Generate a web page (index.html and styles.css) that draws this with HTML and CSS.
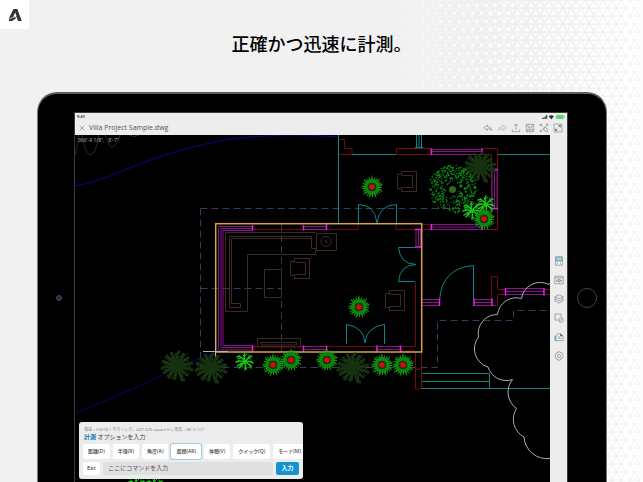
FILE: index.html
```html
<!DOCTYPE html>
<html lang="ja">
<head>
<meta charset="utf-8">
<meta name="viewport" content="width=device-width, initial-scale=1">
<title>Villa Project Sample.dwg</title>
<link rel="stylesheet" href="styles.css">
</head>
<body>
<svg class="mesh" id="mesh" aria-hidden="true"></svg>
<header class="brand">
  <svg class="brand-mark" viewBox="0 0 14 14" aria-label="Autodesk" role="img">
    <path fill="#333" d="M5.500 1H9.300L13.800 13H10L8.700 9.300L8 8.600L8.400 7.800L7.300 4.400L5 9L.8 10.500Z"/>
    <path fill="#888" d="M.8 10.500L6.200 8.500L8 8.900L6.800 10L1 12Z"/>
    <path fill="#333" d="M.8 13L1.100 11.400L8 9.200L7.600 10.700L4 13Z"/>
  </svg>
</header>
<h1 class="headline">正確かつ迅速に計測。</h1>

<main class="tablet">
  <div class="bezel"><span class="camera"></span></div>
  <section class="screen">
    <div class="status">
      <span>9:41</span>
      <svg class="status-icons" viewBox="0 0 23 6" aria-hidden="true">
        <path fill="#333" d="M0 5V4H1V5ZM1.4 5V3.2H2.4V5ZM2.8 5V2.2H3.8V5ZM4.2 5V1H5.2V5ZM9.3 5.4L6.7 2.3Q9.3 .1 11.9 2.3Z"/>
        <rect x="14" y="1" width="7.6" height="4" rx="1" fill="#5fd470"/><path stroke="#5fd470" d="M22.4 2.2V3.8"/>
      </svg>
    </div>
    <div class="titlebar">
      <button class="icon" aria-label="閉じる"><svg viewBox="0 0 10 10"><path d="M2.5 2.5L7.5 7.5M7.5 2.5L2.5 7.5"/></svg></button>
      <span class="filename">Villa Project Sample.dwg</span>
      <div class="actions">
        <button class="icon" aria-label="元に戻す"><svg viewBox="0 0 10 10"><path d="M4.4 2L.8 4.7L4.4 7.3V5.8Q7.5 5.5 8.7 7.4Q8.5 3.8 4.4 3.6Z"/></svg></button>
        <button class="icon faint" aria-label="やり直し"><svg viewBox="0 0 10 10"><path d="M5.6 2L9.2 4.7L5.6 7.3V5.8Q2.5 5.5 1.3 7.4Q1.5 3.8 5.6 3.6Z"/></svg></button>
        <button class="icon" aria-label="共有"><svg viewBox="0 0 10 10"><path d="M5 7V1M3.2 2.8L5 1L6.8 2.8M1.3 6.5V8.7H8.7V6.5"/></svg></button>
        <button class="icon" aria-label="保存"><svg viewBox="0 0 10 10"><path d="M1.3 1.3H8.7V8.7H1.3ZM3 1.3V4.2H7V1.3M2.7 8.7V6.2H7.3V8.7M4.7 6.4V8.4"/></svg></button>
        <button class="icon" aria-label="全体表示"><svg viewBox="0 0 10 10"><path d="M1.2 1.2L4.3 4.3M8.8 1.2L1.2 8.8M1.2 3V1.2H3M7 1.2H8.8V3M1.2 7V8.8H3M7.8 7.8L9.3 9.3"/><circle cx="6.6" cy="6.5" r="1.8"/></svg></button>
        <button class="icon" aria-label="全画面"><svg viewBox="0 0 10 10"><path d="M1 1H9V9H1ZM5.5 4.5L7.3 2.7M4.5 5.5L2.7 7.3"/><path class="solid" d="M5.3 2.3H7.7V4.7ZM2.3 5.3V7.7H4.7Z"/></svg></button>
      </div>
    </div>
    <div class="workspace">
      <div class="canvas">
        <svg class="drawing" viewBox="75 135 475 347" preserveAspectRatio="xMinYMin slice" role="img" aria-label="平面図">
          <defs>
            <g id="flower">
              <circle r="6" stroke="#087508" stroke-width="4"/>
              <circle r="7.300" stroke="#15a015" stroke-width="5.400" stroke-dasharray=".8 1.300"/>
              <path stroke="#13a013" stroke-width=".8" d="M0-7V-11.500M5-6L8-8.500M7-2L11-3M7 3L10 5M3 7L4 10.500M-2 7L-3 11M-6 5L-9 7M-7 0H-11M-5-5L-8-8"/>
              <circle r="3.800" fill="#0a2a05" stroke="#104a0b" stroke-width=".8"/>
              <circle r="2.800" fill="#d40b12"/>
            </g>
            <g id="palm" stroke="#17c517" stroke-width="1.5" stroke-linecap="round">
              <path d="M0 0Q-4-7-8-5M0 0Q-2-7 0-9M0 0Q3-5 7-6M0 0Q5-2 8 1M0 0Q5 2 6 6M0 0Q1 4 0 8M0 0Q-3 2-6 6M0 0Q-5-2-9 0M0 0Q-5 2-8 4"/>
              <path stroke-width="1" d="M-5-5L-6-7M-4-4L-7-3M0-6L2-8M0-5L-2-7M4-4L6-3M4-4L4-7M5 0L7-1M4 2L7 4M0 5L2 7M-3 3L-3 6M-5 0L-7-2"/>
            </g>
            <g id="bush" stroke="#15310f" stroke-width="3">
              <path d="M0 0L-6-14M0 0L0-12L3-15M0 0L7-13M0 0L12-9M0 0L16-3M0 0L13 3L16 5M0 0L11 10M0 0L5 14L8 14M0 0L-2 12L-4 13M0 0L-9 12M0 0L-14 7M0 0L-13 1L-16 3M0 0L-15-5M0 0L-11-11"/>
              <path stroke="#21421b" stroke-width=".8" d="M-3-8L-8-8M-3-8L-1-13M1-8L5-11M6-8L10-13M6-7L12-4M8-2L14 1M7 2L13 8M5 5L6 12M0 7L-6 12M-4 5L-11 10M-8 3L-13 4M-8-2L-14-2M-7-5L-13-9"/>
            </g>
            <g id="chair"><path d="M4.500 3.500V.5H19.500V20.500H4.500V17.500M4.500 4.500H15.500V16.500H4.500M4.500 3.500H.5V17.500H4.500"/></g>
          </defs>
          <g fill="none">
            <g stroke="#070794"><path d="M75 186Q96 182 120 172C165 153 190 147 230 139Q286 132 338 137"/><path stroke="#06066c" d="M75 413Q112 399 150 381T214 352"/></g>
            <g stroke="#30272a"><path d="M75 155Q78 144 79 135M82 135Q85 154 91 155Q96 153 99 135M105 135Q109 147 112 147Q117 146 120 135M129 135Q134 138 139 135"/></g>
            <g stroke="#3a385c" stroke-dasharray="7 4">
              <path d="M200.500 208.500H480M200.500 208.500V367.500M200.500 367.500H437.500V320.500H513.500V310.500H547M281.500 224V352M200.500 288.500H282"/>
            </g>
            <g stroke="#3c2a23">
              <path d="M225.500 232.500H316M225.500 232.500V311.500H247.500V254.500H315.500V250M316 248.500H311.500V236.500H229.500V307.500H240.500V303.500H231.500V238.500H311"/>
              <path d="M316.500 233.500H336.500V250.500H316.500Z"/><circle cx="326" cy="241.500" r="5"/><circle cx="326" cy="241.500" r="1"/>
              <path d="M264.500 269.500H281.500V297.500H264.500ZM257.500 338.500H300.500V347H257.500ZM261 342.500H296.500V345H261Z"/>
              <use href="#chair" x="290" y="258"/><use href="#chair" x="397" y="171"/><use href="#chair" x="385" y="290"/>
            </g>
            <g stroke="#700d14">
              <path d="M338.500 139.500H344.500V148.500H352V154.500H338.500ZM396.500 148.500H431V154.500H396.500ZM482 148.500H497.500V229.500H482M482 154.500H491.500V224.500H482M422 224.500H431V229.500H422"/>
              <path d="M253 229.500H303M327 229.500H358V224M396 224V229.500H416M415.500 282V346.500H327M401 351H415.500M253 346.500H303M421.500 352V369M415.500 352V389H421.500V369H415.500M497.500 289V276.500H491.500V305.500H497.500V294.500M497.500 289.500H505M497.500 294.500H505M544 289.500H550M544 294.500H550"/>
            </g>
            <g stroke="#0b8688">
              <path d="M338.500 135V223M352 154.500H396M498 154.500H550M416.500 135V148M419 135V148M421.500 135V148M415 147.500H423"/>
              <path d="M358.500 223V204.500Q375 205 377 223Q379 205 396.500 204.500V223M415 247.500H398.500Q400 264 416 264.500Q400 265 398.500 281.500H415M346.500 344V324.500Q364 327 365 343Q366 327 384.500 324.500V344M439.500 300Q442 268 473.500 265.500V300"/>
              <path d="M422 373.500H489.500V388.500M422 381.500H489.500M422 388.500H550"/>
            </g>
            <g stroke="#8b128e">
              <path d="M253 226.500H218.500V350H253M253 228.500H221V347.500H253M253 230.500H223V345.500H253M303 226.500H327M303 229.500H327M303 346.500H327M303 349.500H327M377 346.500H401M377 349.500H401"/>
              <path d="M416 229V247M418.500 229V247M420.500 229V247M431 149.500H482M431 151.500H482M431 154.500H482M431 224.500H482M431 227H482M431 229.500H482M492 169V208M494.500 169V208M497 169V208M422 299.500H439M422 302.500H439M422 305.500H439M474 299.500H492M474 302.500H492M474 305.500H492M505 288.500H544M505 291.500H544M505 294.500H544"/>
            </g>
            <path stroke="#f01bf0" stroke-width="1.500" d="M252.500 225V230.500M303.500 225V230.500M326.500 224V230M252.500 345.500V352M303.500 345.500V352M326.500 345.500V352M377 345.500V352M400.500 345.500V352M415 229.500H422M415 247H422M431.500 148.500V155M482 148.500V155M431.500 224V230M482 224V230M491 169.500H498M491 208.500H498M439.500 298.500V306M492 298.500V306M474 298.500V306M505.500 288V295.500M544 288V295.500"/>
            <rect x="215.700" y="223.700" width="206" height="128.300" stroke="#dba443" stroke-width="1.500"/>
            <path stroke="#b9b39a" d="M203 351.500H228M215.500 338V363"/>
            <path stroke="#aaa" d="M550 283L549 284.500A19 19 0 0 0 521.500 298.500A19 19 0 0 0 497.500 314.500A19 19 0 0 0 478.500 337A19 19 0 0 0 488 367A19 19 0 0 0 512.500 379.500A20 20 0 0 0 516.500 408.500A20 20 0 0 0 524 437A23 23 0 0 0 550 458.500"/>
            <g><use href="#bush" x="177" y="366"/><use href="#bush" x="211" y="368"/><use href="#bush" x="353" y="368"/><use href="#bush" x="480" y="167"/></g>
            <g id="tree"></g>
            <use href="#palm" x="245" y="362"/><use href="#palm" x="486" y="205"/><use href="#palm" x="472" y="211"/><use href="#palm" x="137" y="487"/><use href="#palm" x="155" y="487"/>
            <g><use href="#flower" x="372" y="187"/><use href="#flower" x="359" y="307"/><use href="#flower" x="327" y="360"/><use href="#flower" x="382" y="365"/><use href="#flower" x="403" y="365"/><use href="#flower" x="273" y="365"/><use href="#flower" x="291" y="360"/><use href="#flower" x="484" y="219"/></g>
          </g>
        </svg>
        <div class="coords">366'-9 1/8",&nbsp;&nbsp; 8'-7"</div>
        <form class="command">
          <p class="measure">領域 = 63018.1 平方インチ。(437.626 square ft.), 周長 = 86'-0 1/2"</p>
          <p class="prompt"><b>計測</b> オプションを入力</p>
          <div class="options">
            <button type="button">距離(D)</button>
            <button type="button">半径(R)</button>
            <button type="button">角度(A)</button>
            <button type="button" class="active">面積(AR)</button>
            <button type="button">体積(V)</button>
            <button type="button">クイック(Q)</button>
            <button type="button">モード(M)</button>
          </div>
          <div class="entry">
            <button type="button">Esc</button>
            <input type="text" aria-label="コマンド" placeholder="ここにコマンドを入力">
            <button type="button" class="submit">入力</button>
          </div>
        </form>
      </div>
      <nav class="tools">
        <button class="icon" aria-label="計測"><svg viewBox="0 0 10 10"><path class="tint" d="M2 1H8V4.500H2Z"/><path d="M1.500 .8H8.500V9.200H1.500ZM1.500 4.800H8.500M3 6.200H4M6 6.200H7M3 7.800H4M6 7.800H7"/></svg></button>
        <button class="icon" aria-label="表示"><svg viewBox="0 0 10 10"><path d="M.8 1.200H9.200V8.800H.8ZM.8 2.800H9.200M2 5.700Q5 2.800 8 5.700Q5 8.600 2 5.700Z"/><circle cx="5" cy="5.700" r="1"/></svg></button>
        <button class="icon" aria-label="画層"><svg viewBox="0 0 10 10"><path d="M5 .7L9 2.700L5 4.700L1 2.700ZM1 2.700V4.800L5 6.900L9 4.800V2.700M1 4.800V7L5 9.200L9 7V4.800"/></svg></button>
        <button class="icon" aria-label="図形"><svg viewBox="0 0 10 10"><path d="M4.500 7H1V1H7V4M5.200 8.500L8.500 5.300"/><circle cx="7" cy="7" r="2.300"/></svg></button>
        <button class="icon" aria-label="挿入"><svg viewBox="0 0 10 10"><path class="tint" d="M1 4H7V8H1Z"/><path class="paper" d="M3 2H6.500L9 4.300V8.500H3Z"/><path d="M1 3.500V8.700H9V4L6.500 1.800H3V3.500M4 5H6.500M4 6.500H7.500"/><path class="solid" d="M6.200 1.500L9.200 4.300H6.200Z"/></svg></button>
        <button class="icon" aria-label="設定"><svg viewBox="0 0 10 10"><path d="M4 .8H6L6.500 2L7.800 1.600L9 3.300L8.300 4.400L9.200 5.500L8.400 7.300L7 7.200L6.300 9.100H3.900L3.200 7.900L1.900 7.700L.9 6L1.700 5L1 3.600L2.200 2L3.500 2.200Z"/><circle cx="5" cy="5" r="1.600"/></svg></button>
      </nav>
    </div>
  </section>
  <div class="bezel"><span class="home"></span></div>
</main>
<script src="script.js"></script>
</body>
</html>
```

FILE: styles.css
```css
* { box-sizing: border-box; }

body {
  margin: 0;
  height: 100vh;
  overflow: hidden;
  position: relative;
  display: flex;
  flex-direction: column;
  background: #f1f1f1;
  color: #444;
  font-family: "Noto Sans", "Noto Sans CJK JP", sans-serif;
}

.mesh {
  position: absolute;
  inset: 0;
  width: 100%;
  height: 100%;
  z-index: -1;
}

.brand {
  width: 29px;
  height: 29px;
  flex: none;
  display: grid;
  place-items: center;
  background: #fff;
  border-radius: 0 0 3px 0;
}

.brand-mark { width: 14px; height: 14px; }

.headline {
  margin: 0;
  color: #000;
  text-align: center;
  font: 500 18px/28px "Noto Sans CJK JP", sans-serif;
}

.tablet {
  flex: 1;
  min-height: 0;
  margin: 35px 36px 0 37px;
  display: grid;
  grid-template-columns: 37px 1fr 39px;
  padding-top: 19px;
  background: #000;
  border: 1px solid #77797c;
  border-top: 2px solid #5c5e61;
  border-bottom: 0;
  border-radius: 20px 20px 0 0;
}

.bezel { padding-top: 175px; display: flex; justify-content: center; align-items: start; }

.camera {
  width: 6px;
  height: 6px;
  margin-top: 7px;
  margin-left: 4px;
  border-radius: 50%;
  background: #252a55;
  border: 1px solid #454757;
}

.home {
  width: 20px;
  height: 20px;
  border-radius: 50%;
  border: 1px solid #444;
}

.screen {
  min-width: 0;
  min-height: 0;
  display: flex;
  flex-direction: column;
  background: #ededed;
  box-shadow: 0 0 0 1px #3c3c3c;
}

.status {
  height: 8px;
  display: flex;
  justify-content: space-between;
  padding: 0 2px;
  font-size: 4px;
  line-height: 8px;
  font-weight: 700;
}

.status-icons { width: 23px; height: 6px; margin-top: 1px; }

.titlebar {
  height: 14px;
  display: flex;
  align-items: center;
  gap: 2px;
  padding: 0 4px 0 2px;
}

.filename {
  flex: 1;
  color: #555;
  font-family: "Open Sans", sans-serif;
  font-size: 7px;
  line-height: 14px;
}

.actions { display: flex; gap: 4px; }

button { font: inherit; color: inherit; border: 0; cursor: pointer; }

.icon {
  width: 10px;
  height: 10px;
  padding: 0;
  background: none;
}

.icon svg {
  display: block;
  width: 10px;
  height: 10px;
  fill: none;
  stroke: #888;
  stroke-width: .7;
}

.faint { opacity: .6; }
.icon .solid { fill: #555; stroke: none; }
.icon .paper { fill: #f5f5f5; stroke: none; }
.icon .tint { fill: #9fd1ec; stroke: #68b5df; }

.workspace { flex: 1; min-height: 0; display: flex; }

.canvas {
  flex: 1;
  min-width: 0;
  position: relative;
  background: #000;
  overflow: hidden;
}

.drawing { display: block; width: 100%; height: 100%; }

.coords {
  position: absolute;
  top: 1px;
  left: 3px;
  color: #aaa;
  font-size: 5px;
  line-height: 8px;
}

.tools {
  width: 17px;
  display: flex;
  flex-direction: column;
  align-items: center;
  gap: 9px;
  padding-top: 121px;
}

.command {
  position: absolute;
  left: 4px;
  bottom: 3px;
  width: 224px;
  padding: 4px;
  overflow: hidden;
  background: #ececec;
  border-radius: 3px;
  display: flex;
  flex-direction: column;
}

.command p { margin: 0; padding-left: 1px; white-space: nowrap; }
.measure { font-size: 4px; line-height: 7px; color: #888; }
.prompt { font-size: 6px; line-height: 8px; }
.prompt b { color: #1478b8; }

.options { display: flex; gap: 3px; margin: 3px 0; }

.command button {
  flex: none;
  height: 15px;
  padding: 0 5px;
  border-radius: 2px;
  background: #fff;
  font-size: 5px;
  font-weight: 500;
  line-height: 15px;
  white-space: nowrap;
}

.command .active { box-shadow: 0 0 0 1px #9fcde6; }

.entry { display: flex; gap: 3px; }
.command .entry button { height: 13px; padding: 0 4px; line-height: 13px; font-size: 6px; }

.entry input {
  flex: 1;
  min-width: 0;
  height: 13px;
  padding: 0 5px;
  border: 0;
  border-radius: 2px;
  background: #e0e0e0;
  font: 6px/13px "Noto Sans", "Noto Sans CJK JP", sans-serif;
}

.entry input::placeholder { color: #555; opacity: 1; }

.command .entry .submit {
  width: 23px;
  background: #1592d2;
  color: #fff;
  font-weight: 700;
}
```

FILE: script.js
```js
const ns = "http://www.w3.org/2000/svg";

function addPath(parent, d, attrs) {
  const path = document.createElementNS(ns, "path");
  path.setAttribute("d", d);
  for (const key in attrs) path.setAttribute(key, attrs[key]);
  parent.appendChild(path);
}

// Triangular mesh: the white cells grow from left to right until only thin lines remain.
const side = 9;
const rise = 8;
let cells = "";
const start = innerWidth * 0.55;
const full = innerWidth;
for (let row = 0; row * rise < innerHeight; row++) {
  for (let x = Math.floor(start / side) * side + (row % 2) * side / 2; x < innerWidth + side; x += side) {
    const t = Math.min(1, (x - start) / (full - start));
    if (t <= 0) continue;
    const k = 0.1 + 0.82 * t;
    const w = side / 2 * k;
    const up = row * rise + rise * 2 / 3;
    cells += `M${x} ${up - rise * 2 / 3 * k}l${w} ${rise * k}h${-2 * w}z`;
    if (t > 0.25) {
      const k2 = (t - 0.25) / 0.75 * 0.9;
      const w2 = side / 2 * k2;
      cells += `M${x + side / 2} ${row * rise + rise / 3 + rise * 2 / 3 * k2}l${w2} ${-rise * k2}h${-2 * w2}z`;
    }
  }
}
addPath(document.getElementById("mesh"), cells, { fill: "#fff" });

// Round tree: leaf clusters, denser toward the rim.
let seed = 7;
const rand = () => (seed = (seed * 16807) % 2147483647) / 2147483647;
let leaves = "";
for (let i = 0; i < 460; i++) {
  const angle = rand() * Math.PI * 2;
  const radius = 6 + 18 * Math.pow(rand(), 0.6);
  const x = 453 + Math.cos(angle) * radius;
  const y = 189 + Math.sin(angle) * radius;
  leaves += `M${x} ${y}l${rand() * 3 - 1.5} ${rand() * 3 - 1.5}`;
}
const tree = document.getElementById("tree");
addPath(tree, leaves, { stroke: "#0b8a18", "stroke-width": 1.2 });
addPath(tree, "M449 189.500a3.500 3.500 0 1 0 7 0a3.500 3.500 0 1 0-7 0", { fill: "#2c6a16" });
```
